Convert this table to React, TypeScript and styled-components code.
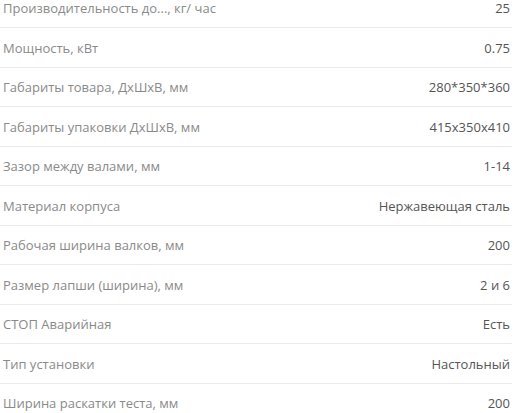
import styled, { createGlobalStyle } from "styled-components";

interface ISpec {
  name: string;
  value: string;
}

const specs: ISpec[] = [
  { name: "Производительность до..., кг/ час", value: "25" },
  { name: "Мощность, кВт", value: "0.75" },
  { name: "Габариты товара, ДхШхВ, мм", value: "280*350*360" },
  { name: "Габариты упаковки ДхШхВ, мм", value: "415x350x410" },
  { name: "Зазор между валами, мм", value: "1-14" },
  { name: "Материал корпуса", value: "Нержавеющая сталь" },
  { name: "Рабочая ширина валков, мм", value: "200" },
  { name: "Размер лапши (ширина), мм", value: "2 и 6" },
  { name: "СТОП Аварийная", value: "Есть" },
  { name: "Тип установки", value: "Настольный" },
  { name: "Ширина раскатки теста, мм", value: "200" },
];

const GlobalStyle = createGlobalStyle`
  body {
    margin: 0;
    background: #ffffff;
    font-family: "Open Sans", "Liberation Sans", sans-serif;
    overflow: hidden;
  }
`;

export default function App() {
  return (
    <>
      <GlobalStyle />
      <SpecList>
        {specs.map((s) => (
          <SpecRow key={s.name}>
            <SpecName>{s.name}</SpecName>
            <SpecValue>{s.value}</SpecValue>
          </SpecRow>
        ))}
      </SpecList>
    </>
  );
}

const SpecList = styled.div`
  width: 512px;
  margin-top: -11.5px;
  display: flex;
  flex-direction: column;
`;

const SpecRow = styled.div`
  box-sizing: border-box;
  height: 39.5px;
  display: flex;
  align-items: center;
  justify-content: space-between;
  border-bottom: 1px solid #e9e9e9;
  padding: 1px 2px 0 3px;
  font-size: 13px;
`;

const SpecName = styled.div`
  color: #8a8a8a;
`;

const SpecValue = styled.div`
  color: #555555;
  text-align: right;
`;
